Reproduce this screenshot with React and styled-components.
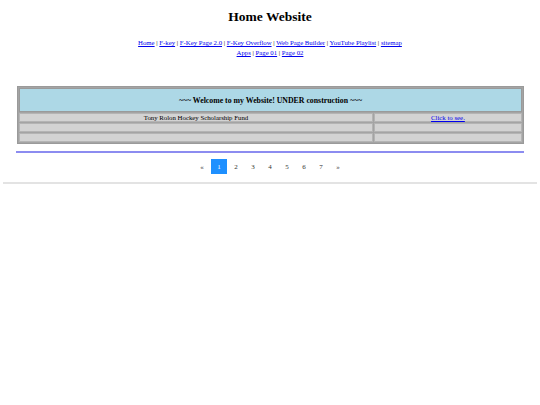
import styled, { createGlobalStyle } from 'styled-components';

const GlobalStyle = createGlobalStyle`
  html, body {
    margin: 0;
    padding: 0;
    background: #ffffff;
  }
  body {
    font-family: 'Liberation Serif', 'Times New Roman', serif;
    color: #000;
  }
`;

const Page = styled.div`
  width: 540px;
  padding-top: 8px;
`;

const Title = styled.h1`
  margin: 0;
  text-align: center;
  font-size: 13.5px;
  line-height: 17px;
  font-weight: bold;
`;

const Nav = styled.nav`
  margin: 13px auto 0;
  text-align: center;
  font-size: 6.75px;
  line-height: 10px;
  color: #000;

  & a {
    color: #0000ee;
    text-decoration: underline;
  }
`;

const TableWrap = styled.div`
  margin: 28px 16px 0 17px;
`;

const Table = styled.table`
  width: 100%;
  border-collapse: separate;
  border-spacing: 1px;
  border: 1px solid #9a9a9a;
  background: #a4a4a4;
  font-size: 6.8px;
`;

const HeaderCell = styled.td`
  background: #add8e6;
  border: 1px solid #9a9a9a;
  height: 22px;
  text-align: center;
  font-size: 7.8px;
  font-weight: bold;
  padding: 0;
`;

const Cell = styled.td`
  background: #d3d3d3;
  border: 1px solid #b4b4b4;
  height: 7px;
  line-height: 7px;
  padding: 0;
  text-align: center;
  width: ${(p) => p.$w || 'auto'};

  & a {
    color: #0000ee;
  }
`;

const BlueRule = styled.div`
  margin: 7px 16px 0 16px;
  height: 2px;
  background: #8c8cf0;
`;

const Pager = styled.ul`
  list-style: none;
  margin: 6px 0 0;
  padding: 0;
  display: flex;
  justify-content: center;
  gap: 1px;
  font-size: 7px;
`;

const PageItem = styled.li`
  width: 16px;
  height: 15px;
  display: flex;
  align-items: center;
  justify-content: center;
  background: ${(p) => (p.$active ? '#1e90ff' : 'transparent')};
  color: ${(p) => (p.$active ? '#ffffff' : '#333')};
`;

const GrayRule = styled.div`
  margin: 8px 3px 0;
  height: 2px;
  background: #e3e3e3;
`;

const firstLine = ['Home', 'F-key', 'F-Key Page 2.0', 'F-Key Overflow', 'Web Page Builder', 'YouTube Playlist', 'sitemap'];
const secondLine = ['Apps', 'Page 01', 'Page 02'];

const LinkLine = ({ items }) => (
  <div>
    {items.map((l, i) => (
      <span key={l}>
        <a href="#">{l}</a>
        {i < items.length - 1 ? ' | ' : ''}
      </span>
    ))}
  </div>
);

export default function App() {
  return (
    <Page>
      <GlobalStyle />
      <Title>Home Website</Title>
      <Nav>
        <LinkLine items={firstLine} />
        <LinkLine items={secondLine} />
      </Nav>
      <TableWrap>
        <Table>
          <tbody>
            <tr>
              <HeaderCell colSpan={2}>~~~ Welcome to my Website! UNDER construction ~~~</HeaderCell>
            </tr>
            <tr>
              <Cell $w="70.5%">Tony Rolon Hockey Scholarship Fund</Cell>
              <Cell><a href="#">Click to see.</a></Cell>
            </tr>
            <tr>
              <Cell />
              <Cell />
            </tr>
            <tr>
              <Cell />
              <Cell />
            </tr>
          </tbody>
        </Table>
      </TableWrap>
      <BlueRule />
      <Pager>
        <PageItem>«</PageItem>
        {[1, 2, 3, 4, 5, 6, 7].map((n) => (
          <PageItem key={n} $active={n === 1}>{n}</PageItem>
        ))}
        <PageItem>»</PageItem>
      </Pager>
      <GrayRule />
    </Page>
  );
}
